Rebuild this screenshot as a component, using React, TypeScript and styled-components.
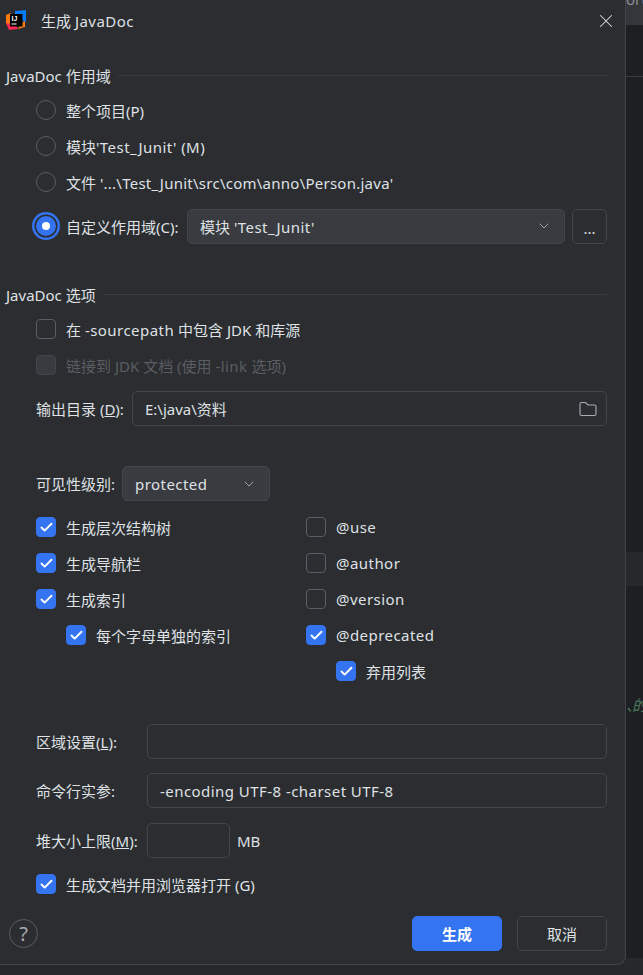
import React from 'react'
import styled, { createGlobalStyle } from 'styled-components'
import { ChevronDown, Check, X } from 'lucide-react'

const GlobalStyle = createGlobalStyle`
  html, body {
    margin: 0;
    padding: 0;
    width: 643px;
    height: 975px;
    overflow: hidden;
    background: #27282b;
  }
  * { box-sizing: border-box; }
`

const Page = styled.div`
  display: flex;
  align-items: flex-start;
  width: 643px;
  height: 975px;
  font-family: "Noto Sans", "Noto Sans CJK SC", sans-serif;
  font-size: 15px;
  color: #dfe1e5;
`

// latin runs sit a little wider than the cjk ones in the reference
const Latin = styled.span<{ $tight?: boolean }>`
  letter-spacing: ${p => (p.$tight ? 0.25 : 0.45)}px;
`

const Dialog = styled.div`
  flex: 0 0 626px;
  height: 965px;
  display: flex;
  flex-direction: column;
  background: #2b2d30;
  border-right: 1px solid #43454a;
  border-bottom: 1px solid #43454a;
  border-bottom-right-radius: 9px;
`

const TitleBar = styled.div`
  height: 42px;
  display: flex;
  align-items: center;
  padding: 0 8px 0 6px;
`

const LogoBox = styled.div`
  display: flex;
  margin-bottom: 2px;
`

const Title = styled.div`
  flex: 1;
  margin-left: 15px;
  padding-bottom: 2px;
`

const Body = styled.div`
  flex: 1;
  display: flex;
  flex-direction: column;
  padding: 0 18px 0 6px;
`

const SectionTitle = styled.div<{ $top: number }>`
  display: flex;
  align-items: center;
  gap: 7px;
  height: 20px;
  margin-top: ${p => p.$top}px;
  white-space: nowrap;
  &::after {
    content: '';
    flex: 1;
    height: 1px;
    background: #393b40;
  }
`

const Rows = styled.div<{ $top: number }>`
  display: flex;
  flex-direction: column;
  margin-top: ${p => p.$top}px;
  padding-left: 30px;
`

const Row = styled.div<{ $height?: number; $top?: number; $indent?: number }>`
  display: flex;
  align-items: center;
  height: ${p => p.$height ?? 36}px;
  margin-top: ${p => p.$top ?? 0}px;
  padding-left: ${p => p.$indent ?? 0}px;
  white-space: nowrap;
`

const RadioMark = styled.span<{ $on?: boolean }>`
  flex: none;
  width: 20px;
  height: 20px;
  margin-right: 10px;
  border-radius: 50%;
  border: 1px solid #5a5d63;
  background: transparent;
  ${p => p.$on && `
    position: relative;
    border: 0;
    background: #3574f0;
    box-shadow: 0 0 0 1.5px #2b2d30, 0 0 0 4px #3574f0;
    &::after {
      content: '';
      position: absolute;
      left: 6px;
      top: 6px;
      width: 8px;
      height: 8px;
      border-radius: 50%;
      background: #fff;
    }
  `}
`

const CheckMark = styled.span<{ $on?: boolean; $off?: boolean }>`
  flex: none;
  width: 20px;
  height: 20px;
  margin-right: 10px;
  display: flex;
  align-items: center;
  justify-content: center;
  border-radius: 4px;
  border: 1px solid ${p => (p.$on ? '#3574f0' : p.$off ? '#43454a' : '#5a5d63')};
  background: ${p => (p.$on ? '#3574f0' : p.$off ? '#393b40' : 'transparent')};
  color: #fff;
`

const Muted = styled.span`
  color: #5a5d63;
`

const Select = styled.div<{ $width?: number }>`
  display: flex;
  align-items: center;
  justify-content: space-between;
  flex: ${p => (p.$width ? `0 0 ${p.$width}px` : '1')};
  height: 35px;
  padding: 0 12px;
  background: #393b40;
  border: 1px solid #43454a;
  border-radius: 5px;
  color: #dfe1e5;
  svg { color: #9da0a8; }
`

const MoreButton = styled.div`
  flex: 0 0 35px;
  height: 35px;
  margin-left: 7px;
  display: flex;
  align-items: center;
  justify-content: center;
  border: 1px solid #43454a;
  border-radius: 5px;
  padding-top: 3px;
`

const Label = styled.span<{ $width: number }>`
  flex: 0 0 ${p => p.$width}px;
  white-space: nowrap;
`

const Field = styled.div<{ $width?: number }>`
  display: flex;
  align-items: center;
  justify-content: space-between;
  flex: ${p => (p.$width ? `0 0 ${p.$width}px` : '1')};
  height: 35px;
  padding: 0 9px 0 12px;
  border: 1px solid #43454a;
  border-radius: 5px;
`

const Unit = styled.span`
  margin-left: 7px;
`

const OptionGrid = styled.div`
  display: grid;
  grid-template-columns: 270px 1fr;
  margin-top: 8px;
`

const Column = styled.div`
  display: flex;
  flex-direction: column;
`

const Footer = styled.div`
  display: flex;
  align-items: center;
  justify-content: flex-end;
  gap: 15px;
  margin-top: 14px;
  padding-left: 3px;
`

const Help = styled.div`
  width: 29px;
  height: 29px;
  margin-right: auto;
  display: flex;
  align-items: center;
  justify-content: center;
  border-radius: 50%;
  border: 1px solid #5a5d63;
  color: #a8adb5;
  font-size: 20px;
`

const Button = styled.div<{ $primary?: boolean }>`
  width: 90px;
  height: 35px;
  display: flex;
  align-items: center;
  justify-content: center;
  border-radius: 5px;
  border: 1px solid ${p => (p.$primary ? '#3574f0' : '#43454a')};
  background: ${p => (p.$primary ? '#3574f0' : 'transparent')};
  color: ${p => (p.$primary ? '#fff' : '#dfe1e5')};
  font-weight: ${p => (p.$primary ? 700 : 400)};
`

// editor showing behind the dialog
const Backdrop = styled.div`
  flex: 1;
  min-width: 0;
  height: 958px;
  display: flex;
  flex-direction: column;
  overflow: hidden;
  background: #1e1f22;
`

const TabStrip = styled.div`
  flex: 0 0 25px;
  overflow: hidden;
  background: #33363a;
  color: #8a8d93;
  font-size: 15px;
  line-height: 14px;
`

const TabText = styled.div`
  margin-top: -8px;
`

const ToolHead = styled.div`
  flex: 0 0 52px;
  border-bottom: 1px solid #393b40;
`

const Gutter = styled.div<{ $height: number }>`
  flex: 0 0 ${p => p.$height}px;
`

const CaretBand = styled.div`
  flex: 0 0 34px;
  background: #26282c;
`

const CodeFragment = styled.div`
  color: #4c7a5a;
  font-style: italic;
  font-size: 15px;
  line-height: 20px;
  letter-spacing: -9px;
  white-space: nowrap;
`

function Logo() {
  return (
    <svg width="20" height="20" viewBox="0 0 20 20">
      <path d="M0 5 L5 3 L5 16 L0 14 Z" fill="#f97a12" />
      <path d="M0 13 L10 15 L12 19 L3 20 Z" fill="#fe2857" />
      <path d="M9 1 L20 0 L20 12 L9 8 Z" fill="#087cfa" />
      <path d="M15 13 L19 11 L19 17 L12 19 Z" fill="#f97a12" />
      <rect x="4" y="4" width="12.5" height="12.5" fill="#000" />
      <text x="5.5" y="11" fill="#fff" fontSize="7" fontWeight="700" fontFamily="Liberation Sans, sans-serif">IJ</text>
      <rect x="5.5" y="13.5" width="5" height="1" fill="#fff" />
    </svg>
  )
}

function Folder() {
  return (
    <svg width="18" height="16" viewBox="0 0 18 16" fill="none" stroke="#a8adb5" strokeWidth="1.1">
      <path d="M1 3 Q1 1.5 2.5 1.5 H6.5 L9 4 H15.5 Q17 4 17 5.5 V13 Q17 14.5 15.5 14.5 H2.5 Q1 14.5 1 13 Z" />
    </svg>
  )
}

function CheckRow({ on, indent, children }: { on?: boolean; indent?: number; children: React.ReactNode }) {
  return (
    <Row $indent={indent}>
      <CheckMark $on={on}>{on && <Check size={15} strokeWidth={3} />}</CheckMark>
      {children}
    </Row>
  )
}

export default function App() {
  return (
    <Page>
      <GlobalStyle />
      <Dialog>
        <TitleBar>
          <LogoBox><Logo /></LogoBox>
          <Title>生成 <Latin>JavaDoc</Latin></Title>
          <X size={22} strokeWidth={1.1} color="#dfe1e5" />
        </TitleBar>
        <Body>
          <SectionTitle $top={23}><span>JavaDoc 作用域</span></SectionTitle>
          <Rows $top={7}>
            <Row><RadioMark />整个项目(P)</Row>
            <Row><RadioMark /><span>模块<Latin>'Test_Junit' (M)</Latin></span></Row>
            <Row><RadioMark /><span>文件 <Latin $tight>'...\Test_Junit\src\com\anno\Person.java'</Latin></span></Row>
            <Row $height={44} $top={4}>
              <RadioMark $on />
              <Label $width={121}>自定义作用域(C):</Label>
              <Select>
                <span>模块 <Latin>'Test_Junit'</Latin></span>
                <ChevronDown size={16} strokeWidth={1.5} />
              </Select>
              <MoreButton>...</MoreButton>
            </Row>
          </Rows>
          <SectionTitle $top={36}><span>JavaDoc 选项</span></SectionTitle>
          <Rows $top={7}>
            <CheckRow><span>在 <Latin>-sourcepath</Latin> 中包含 JDK 和库源</span></CheckRow>
            <Row>
              <CheckMark $off />
              <Muted>链接到 JDK 文档 (使用 <Latin>-link</Latin> 选项)</Muted>
            </Row>
            <Row $height={35} $top={8}>
              <Label $width={96}>输出目录 (<u>D</u>):</Label>
              <Field>
                <span>E:\java\资料</span>
                <Folder />
              </Field>
            </Row>
            <Row $height={35} $top={40}>
              <Label $width={86}>可见性级别:</Label>
              <Select $width={148}>
                <Latin>protected</Latin>
                <ChevronDown size={16} strokeWidth={1.5} />
              </Select>
            </Row>
            <OptionGrid>
              <Column>
                <CheckRow on>生成层次结构树</CheckRow>
                <CheckRow on>生成导航栏</CheckRow>
                <CheckRow on>生成索引</CheckRow>
                <CheckRow on indent={30}>每个字母单独的索引</CheckRow>
              </Column>
              <Column>
                <CheckRow><Latin>@use</Latin></CheckRow>
                <CheckRow><Latin>@author</Latin></CheckRow>
                <CheckRow><Latin>@version</Latin></CheckRow>
                <CheckRow on><Latin>@deprecated</Latin></CheckRow>
                <CheckRow on indent={30}>弃用列表</CheckRow>
              </Column>
            </OptionGrid>
            <Row $height={35} $top={35}>
              <Label $width={111}>区域设置(<u>L</u>):</Label>
              <Field />
            </Row>
            <Row $height={35} $top={14}>
              <Label $width={111}>命令行实参:</Label>
              <Field><Latin>-encoding UTF-8 -charset UTF-8</Latin></Field>
            </Row>
            <Row $height={35} $top={15}>
              <Label $width={111}>堆大小上限(<u>M</u>):</Label>
              <Field $width={83} />
              <Unit>MB</Unit>
            </Row>
            <Row $top={8}>
              <CheckMark $on><Check size={15} strokeWidth={3} /></CheckMark>
              生成文档并用浏览器打开 (G)
            </Row>
          </Rows>
          <Footer>
            <Help>?</Help>
            <Button $primary>生成</Button>
            <Button>取消</Button>
          </Footer>
        </Body>
      </Dialog>
      <Backdrop>
        <TabStrip><TabText>ort</TabText></TabStrip>
        <ToolHead />
        <Gutter $height={475} />
        <CaretBand />
        <Gutter $height={109} />
        <CodeFragment>、的</CodeFragment>
      </Backdrop>
    </Page>
  )
}
